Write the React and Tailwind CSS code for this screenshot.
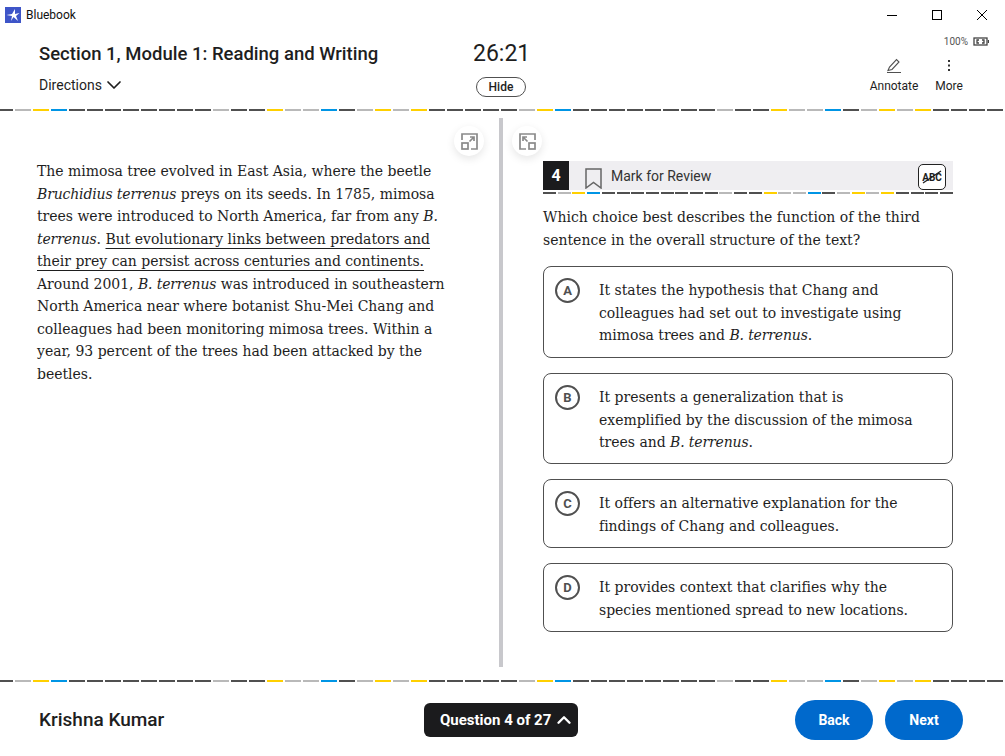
import { ChevronDown, ChevronUp } from "lucide-react";

const D = "bg-[#505050]";
const G = "bg-[#b9b9b9]";
const Y = "bg-[#ffd000]";
const B = "bg-[#0095e5]";

// colour order of the dashed rule, repeats across the page
const dashes = [
  D, G, Y, B, D, D, D, D, D, D, D, D, G, D, D, Y, G, G, B, D, G, Y, G, Y, D, D, D, D,
  D, G, Y, B, D, D, D, D, D, D, D, D, G, D, D, Y, G, G, B, D, G, Y, G, Y, D, D, D, D,
];

function Rule({ className = "" }) {
  return (
    <div className={`flex h-[2px] w-[1005px] shrink-0 gap-[2px] overflow-hidden ${className}`}>
      <span className={`h-[2px] w-[13px] shrink-0 ${D}`} />
      {dashes.slice(1).map((c, i) => (
        <span key={i} className={`h-[2px] w-[16px] shrink-0 ${c}`} />
      ))}
    </div>
  );
}

function QuestionRule() {
  return (
    <div className="mt-[2px] flex h-[2px] w-full justify-between">
      {dashes.slice(0, 28).map((c, i) => (
        <span key={i} className={`h-[2px] w-[13px] ${c}`} />
      ))}
    </div>
  );
}

function Em({ children }) {
  return <i className="tracking-[-0.15px]">{children}</i>;
}

function Choice({ letter, className, children }) {
  return (
    <div className={`flex w-[410px] rounded-[8px] border border-[#505050] pl-[11px] pt-[11px] ${className}`}>
      <span className="flex h-[25px] w-[25px] shrink-0 items-center justify-center rounded-full border-2 border-[#505050] font-['Roboto',sans-serif] text-[13px] font-bold text-[#505050]">
        {letter}
      </span>
      <p className="ml-[19px] mt-px w-[330px] text-[14px] leading-[22.5px] tracking-[-0.02px]">{children}</p>
    </div>
  );
}

function SplitIcon({ flip }) {
  return (
    <svg width="17" height="17" viewBox="0 0 17 17" fill="none" stroke="#8a8a8a" strokeWidth="1.7">
      {flip ? (
        <>
          <path d="M7 16H1V1h15v6" />
          <rect x="10" y="10" width="6" height="6" />
          <path d="M8.5 8.5 4 4M4 8V4h4" />
        </>
      ) : (
        <>
          <path d="M10 16h6V1H1v6" />
          <rect x="1" y="10" width="6" height="6" />
          <path d="M8.5 8.5 13 4M9 4h4v4" />
        </>
      )}
    </svg>
  );
}

function RoundBtn({ flip }) {
  return (
    <div className="flex h-[30px] w-[30px] items-center justify-center rounded-full bg-white shadow-[0_3px_8px_rgba(0,0,0,0.1)]">
      <SplitIcon flip={flip} />
    </div>
  );
}

export default function App() {
  return (
    <div className="flex h-[756px] w-[1005px] flex-col overflow-hidden bg-white font-['Roboto',sans-serif] text-[#1e1e1e]">
      {/* window title bar */}
      <div className="flex h-[30px] shrink-0 items-center pb-px pl-[5px]">
        <svg width="16" height="16" viewBox="0 0 16 16">
          <rect width="16" height="16" fill="#3e55c8" />
          <path d="M1.500 8 7 7l3-5v5l4.500-1L11 9l2 5-4.500-4L6 14l1-5Z" fill="#fff" />
        </svg>
        <span className="ml-[5px] text-[12px] text-[#111]">Bluebook</span>
        <div className="ml-auto flex items-center gap-[35px] pr-[18px]">
          <svg width="10" height="10" viewBox="0 0 10 10" stroke="#000" strokeWidth="1">
            <path d="M0 5.500h10" />
          </svg>
          <svg width="10" height="10" viewBox="0 0 10 10" fill="none" stroke="#000" strokeWidth="1">
            <rect x="0.500" y="0.500" width="9" height="9" />
          </svg>
          <svg width="10" height="10" viewBox="0 0 10 10" stroke="#000" strokeWidth="1">
            <path d="M0 0l10 10M10 0 0 10" />
          </svg>
        </div>
      </div>

      {/* header */}
      <div className="relative h-[79px] shrink-0">
        <div className="absolute left-[39px] top-[11px] text-[18.500px] font-medium leading-[26px]">
          Section 1, Module 1: Reading and Writing
        </div>
        <div className="absolute left-[39px] top-[43px] flex items-center text-[14px] leading-[18px]">
          Directions <ChevronDown size={24} strokeWidth={1.7} />
        </div>
        <div className="absolute left-[473px] top-[9px] text-[23px] font-normal leading-[30px]">26:21</div>
        <div className="absolute left-[476px] top-[47px] flex h-[20px] w-[50px] items-center justify-center rounded-full border border-[#505050] text-[12px] font-medium">
          Hide
        </div>
        <div className="absolute right-[16px] top-[4px] flex items-center gap-[5px] text-[10px] text-[#555]">
          100%
          <svg width="16" height="9" viewBox="0 0 16 9" fill="none" stroke="#444" strokeWidth="1.3">
            <rect x="1" y="1" width="13" height="7" />
            <path d="M15.500 3v3" />
            <path d="M6 3H4v3h2M9 3h2v3H9" />
          </svg>
        </div>
        <div className="absolute left-[870px] top-[28px] flex w-[48px] flex-col items-center text-[12px]">
          <svg width="16" height="16" viewBox="0 0 16 16" fill="none" stroke="#505050" strokeWidth="1.1">
            <path d="M2 12.500 3.500 9 10.500 1.500l2.500 2.500-7 7.500ZM1 14.500h14" />
          </svg>
          <span className="mt-[4px] leading-[16px]">Annotate</span>
        </div>
        <div className="absolute left-[935px] top-[28px] flex w-[28px] flex-col items-center text-[12px]">
          <svg width="16" height="16" viewBox="0 0 16 16" fill="#333">
            <rect x="7" y="2" width="2" height="2" />
            <rect x="7" y="6.500" width="2" height="2" />
            <rect x="7" y="11" width="2" height="2" />
          </svg>
          <span className="mt-[4px] leading-[16px]">More</span>
        </div>
      </div>
      <Rule />

      {/* main */}
      <div className="flex h-[569px] shrink-0 font-['DejaVu_Serif',serif]">
        <div className="relative w-[499px] shrink-0 pl-[37px] pt-[49px]">
          <div className="absolute left-[454px] top-[15px]">
            <RoundBtn />
          </div>
          <p className="w-[416px] text-[14px] leading-[22.5px] tracking-[-0.02px]">
            The mimosa tree evolved in East Asia, where the beetle <Em>Bruchidius terrenus</Em> preys on its seeds. In
            1785, mimosa trees were introduced to North America, far from any <Em>B. terrenus</Em>.{" "}
            <span className="underline underline-offset-[4px]">
              But evolutionary links between predators and their prey can persist across centuries and continents.
            </span>{" "}
            Around 2001, <Em>B. terrenus</Em> was introduced in southeastern North America near where botanist Shu-Mei
            Chang and colleagues had been monitoring mimosa trees. Within a year, 93 percent of the trees had been
            attacked by the beetles.
          </p>
        </div>
        <div className="mt-[7px] h-[549px] w-[4px] shrink-0 bg-[#c8c8cc]" />
        <div className="relative flex-1 pl-[40px] pt-[50px]">
          <div className="absolute left-[9px] top-[15px]">
            <RoundBtn flip />
          </div>
          <div className="w-[410px]">
            <div className="flex h-[29px] items-center bg-[#efeef1]">
              <span className="flex h-[29px] w-[26px] items-center justify-center bg-[#1b1b1d] font-['Roboto',sans-serif] text-[16px] font-bold text-white">
                4
              </span>
              <svg className="ml-[16px] mt-[6px]" width="17" height="21" viewBox="0 0 17 21" fill="none" stroke="#666" strokeWidth="1.500">
                <path d="M1 1h15v19l-7.500-5.500L1 20Z" />
              </svg>
              <span className="ml-[9px] mt-px font-['Roboto',sans-serif] text-[14px] text-[#333]">Mark for Review</span>
              <span className="relative ml-auto mr-[7px] mt-[3px] flex h-[26px] w-[28px] items-center justify-center rounded-[5px] border-[1.500px] border-[#222] bg-white font-['Roboto',sans-serif] text-[10px] font-bold">
                ABC
                <svg className="absolute left-0 top-0" width="25" height="23" viewBox="0 0 25 23" stroke="#222" strokeWidth="1.300">
                  <path d="M4 18 22 6" />
                </svg>
              </span>
            </div>
            <QuestionRule />
            <p className="mt-[12px] text-[14px] leading-[23px]">
              Which choice best describes the function of the third sentence in the overall structure of the text?
            </p>
            <div className="mt-[14px] flex flex-col gap-[15px]">
              <Choice letter="A" className="h-[92px]">
                It states the hypothesis that Chang and colleagues had set out to investigate using mimosa trees and{" "}
                <Em>B. terrenus</Em>.
              </Choice>
              <Choice letter="B" className="h-[91px]">
                It presents a generalization that is exemplified by the discussion of the mimosa trees and{" "}
                <Em>B. terrenus</Em>.
              </Choice>
              <Choice letter="C" className="h-[69px]">
                It offers an alternative explanation for the findings of Chang and colleagues.
              </Choice>
              <Choice letter="D" className="h-[69px]">
                It provides context that clarifies why the species mentioned spread to new locations.
              </Choice>
            </div>
          </div>
        </div>
      </div>

      <Rule />

      {/* footer */}
      <div className="flex flex-1 items-center pl-[39px] pr-[42px] pt-[2px]">
        <span className="w-[385px] text-[19px] font-medium">Krishna Kumar</span>
        <div className="flex h-[34px] w-[154px] items-center gap-[2px] rounded-[6px] bg-[#1b1b1d] pl-[16px] text-[15px] font-bold text-white">
          Question 4 of 27 <ChevronUp size={22} strokeWidth={2.6} />
        </div>
        <div className="ml-auto flex gap-[12px]">
          <div className="flex h-[40px] w-[78px] items-center justify-center rounded-full bg-[#0069cc] text-[14px] font-bold text-white">Back</div>
          <div className="flex h-[40px] w-[78px] items-center justify-center rounded-full bg-[#0069cc] text-[14px] font-bold text-white">Next</div>
        </div>
      </div>
    </div>
  );
}
